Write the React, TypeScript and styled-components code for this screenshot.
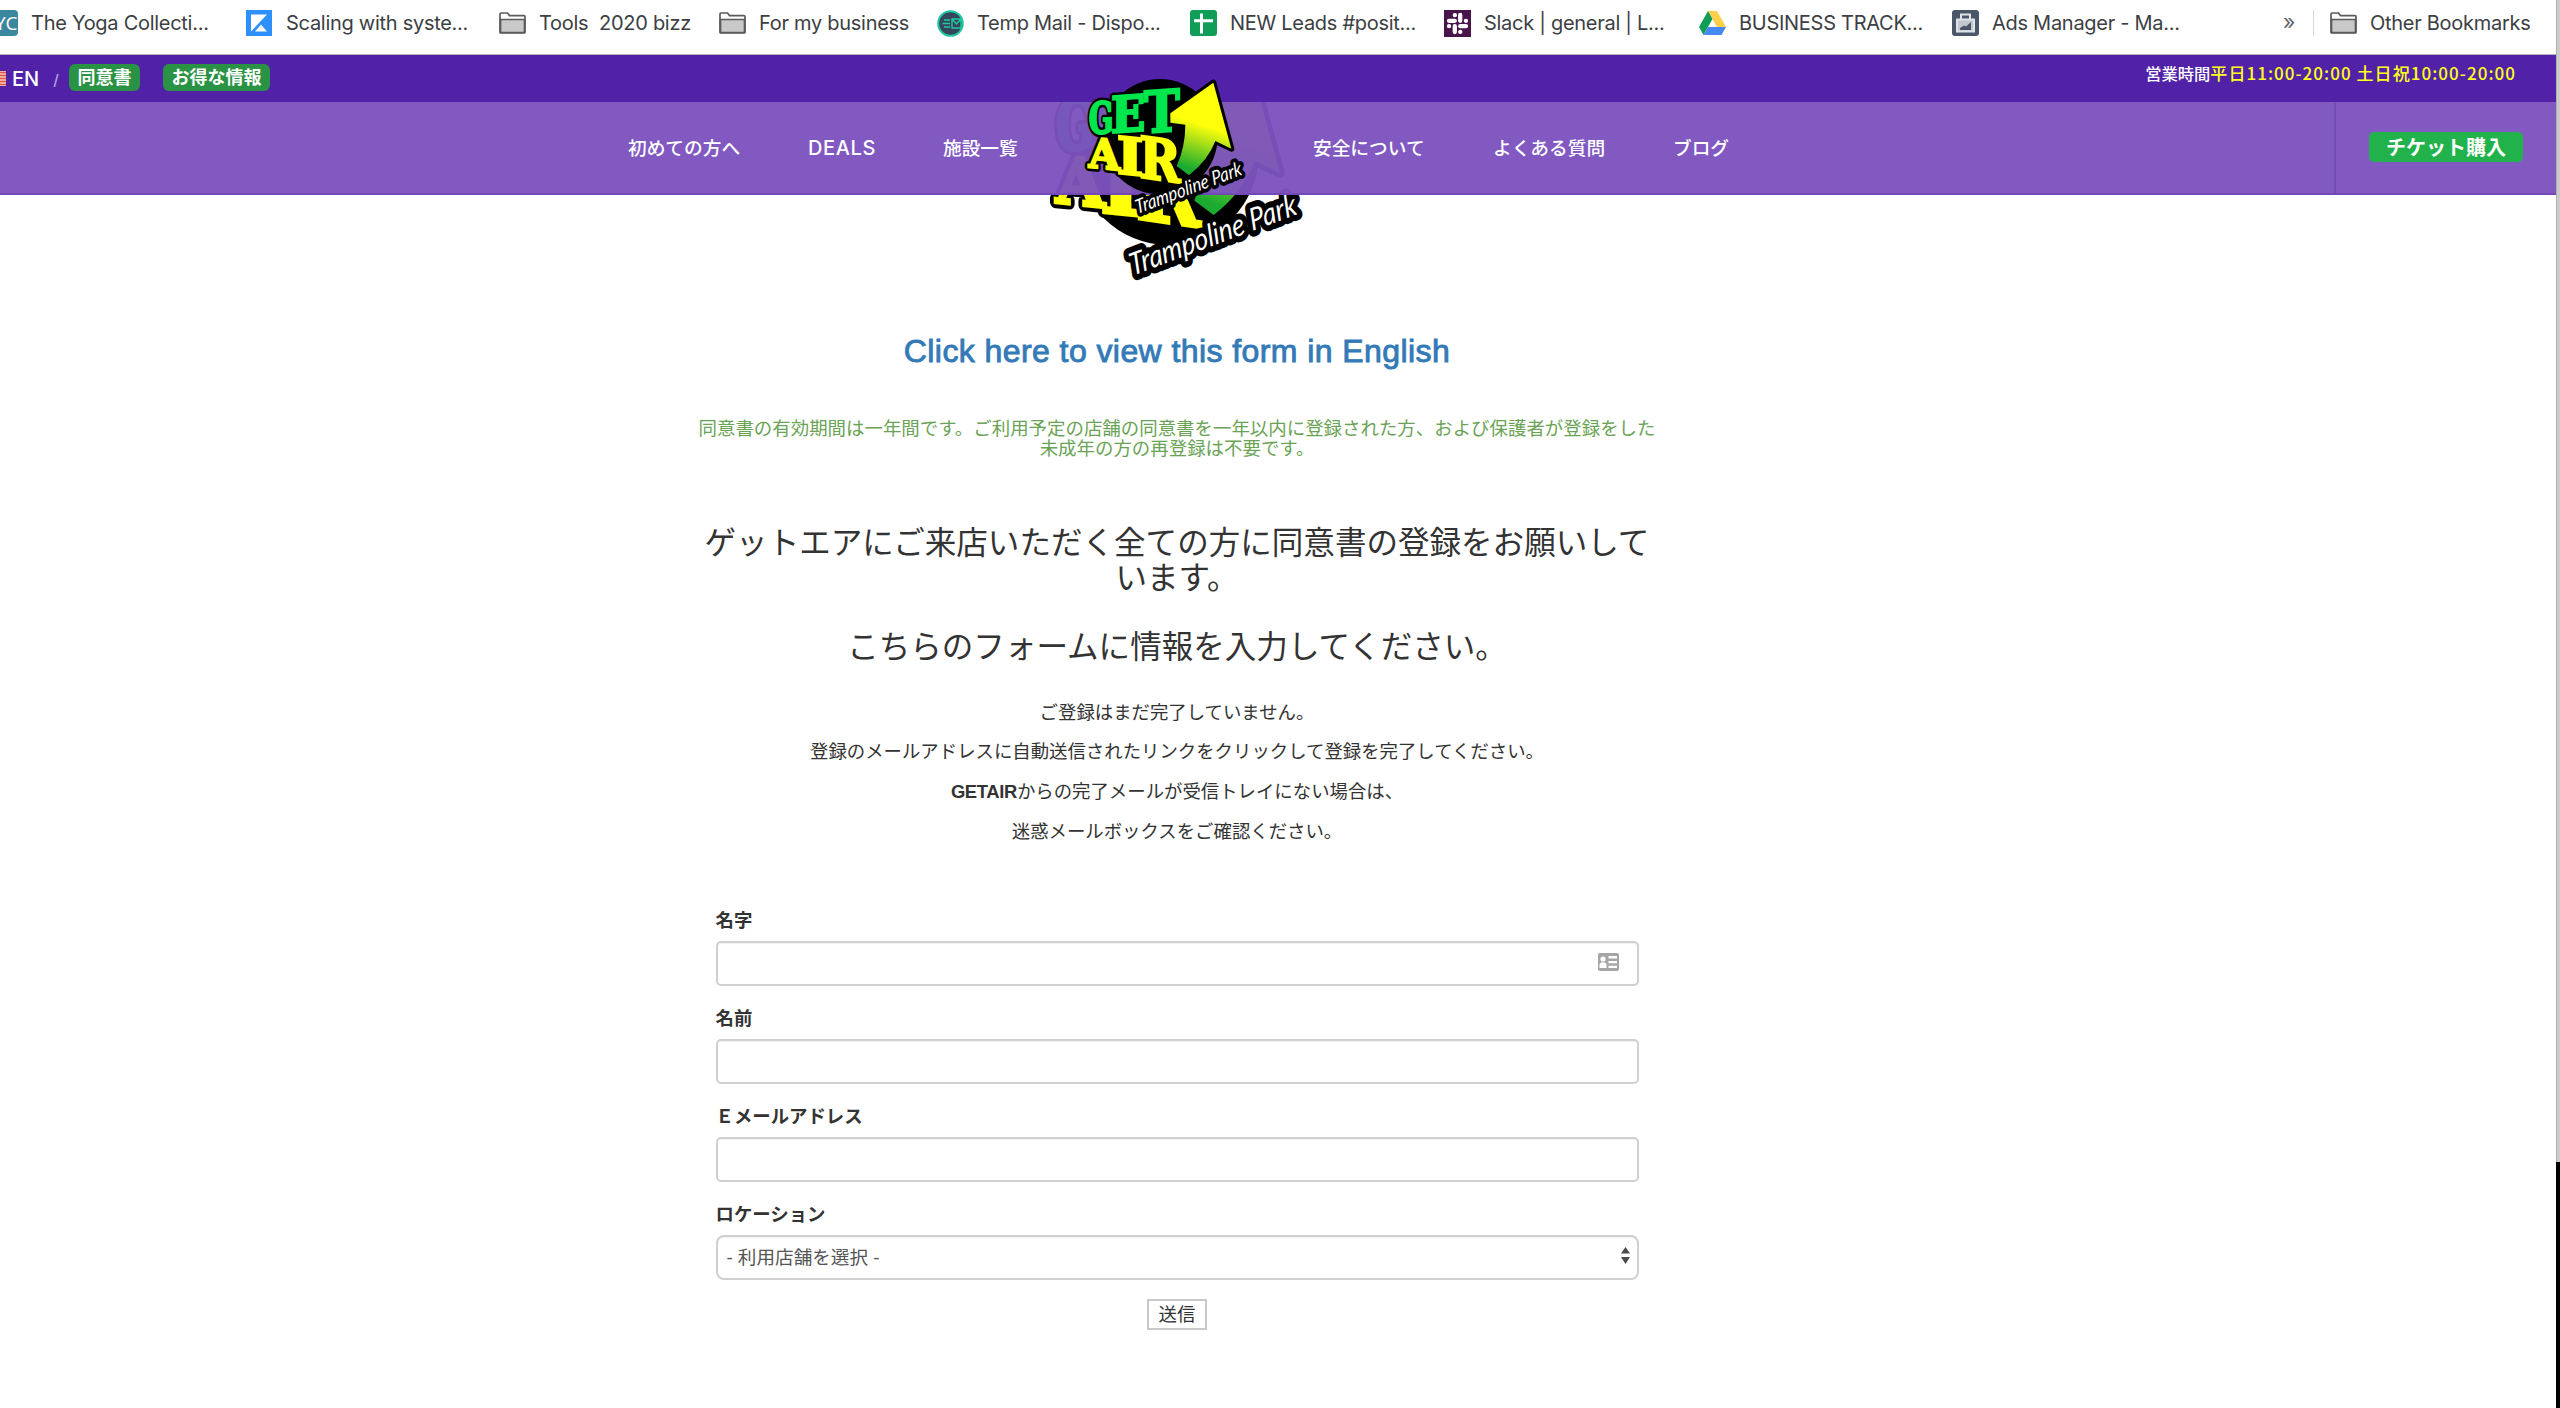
import React from "react";
import styled, { createGlobalStyle } from "styled-components";

const jp = `"Liberation Sans", "Noto Sans CJK JP", sans-serif`;

const GlobalStyle = createGlobalStyle`
  *, *::before, *::after { box-sizing: border-box; }
  body { margin: 0; background: #fff; font-family: ${jp}; color: #333; }
`;

const Window = styled.div`
  display: grid;
  grid-template-columns: 1fr 4px;
  width: 2560px;
  height: 1408px;
  overflow: hidden;
`;
const Page = styled.div`
  display: flex;
  flex-direction: column;
  min-width: 0;
`;
const Edge = styled.div`
  display: grid;
  grid-template-rows: 1162px 1fr;
`;
const EdgeLight = styled.div`
  background: #cbcbcb;
  border-left: 1px solid #b0b0b0;
`;
const EdgeDark = styled.div`
  background: #000;
`;

/* Bookmarks bar */
const Bookmarks = styled.div`
  display: flex;
  align-items: center;
  height: 55px;
  padding-bottom: 8px;
  border-bottom: 1px solid #b5b1bf;
  background: #fff;
  font: 400 20px/26px Inter, sans-serif;
  color: #3c4043;
`;
const Bookmark = styled.div<{ $w: number }>`
  display: flex;
  align-items: center;
  gap: 13px;
  flex: 0 0 ${(p) => p.$w}px;
  overflow: hidden;
  white-space: pre;
`;
const IconBox = styled.span<{ $w?: number }>`
  display: flex;
  justify-content: flex-end;
  flex: 0 0 ${(p) => p.$w ?? 27}px;
  overflow: hidden;
`;
const Label = styled.span`
  letter-spacing: -0.28px;
`;
const More = styled.span`
  width: 30px;
  font-size: 21px;
  color: #5f6368;
  padding-bottom: 3px;
`;
const Separator = styled.span`
  width: 1px;
  height: 26px;
  margin-right: 16px;
  background: #d5d7da;
`;

/* Site header */
const TopBar = styled.div`
  position: relative;
  z-index: 2;
  display: flex;
  align-items: flex-start;
  height: 47px;
  padding: 9px 40px 0 0;
  background: #5122a8;
  color: #fff;
`;
const Lang = styled.span`
  display: flex;
  align-items: center;
  height: 29px;
  gap: 6px;
  width: 69px;
  font: 500 20px/24px Inter, sans-serif;
`;
const Slash = styled.span`
  margin-left: 8px;
  margin-top: 3px;
  font-size: 15px;
  color: #b9a5de;
`;
const Badge = styled.a`
  height: 27px;
  padding: 0 8.5px;
  margin-right: 23px;
  border-radius: 6px;
  background: #2a9245;
  font-size: 18px;
  line-height: 28px;
  font-weight: 700;
`;
const Hours = styled.span`
  display: flex;
  margin-left: auto;
  font: 500 16.3px/18px "Noto Sans CJK JP", sans-serif;
`;
const HoursTime = styled.span`
  color: #ffff1a;
  font-size: 17px;
  letter-spacing: 1.05px;
`;
const Nav = styled.nav`
  position: relative;
  z-index: 1;
  display: flex;
  align-items: center;
  height: 92.5px;
  padding-left: 628px;
  border-bottom: 2px solid #7448b6;
  background: rgba(124, 82, 190, 0.96);
  color: #fff;
  font: 500 18.7px/26px "Noto Sans CJK JP", sans-serif;
`;
const NavLink = styled.a<{ $w: number }>`
  flex: 0 0 ${(p) => p.$w}px;
  white-space: nowrap;
`;
const NavLatin = styled.span`
  font: 500 20px/26px Inter, sans-serif;
  letter-spacing: 0.6px;
`;
const TicketCell = styled.div`
  display: flex;
  align-items: center;
  align-self: stretch;
  width: 222px;
  margin-left: auto;
  padding-left: 33px;
  border-left: 2px solid #744db3;
`;
const Ticket = styled.a`
  width: 154px;
  height: 30px;
  border-radius: 5px;
  background: #22b24c;
  text-align: center;
  font: 700 20px/29px "Noto Sans CJK JP", sans-serif;
`;
const BackLogo = styled.div`
  position: absolute;
  left: 1030px;
  top: 60px;
  z-index: 0;
  display: flex;
`;
const FrontLogo = styled(BackLogo)`
  z-index: 3;
`;

/* Content */
const Content = styled.main`
  width: 960px;
  margin: 0 0 0 697px;
  padding-top: 134.5px;
  text-align: center;
`;
const EnglishLink = styled.a`
  display: block;
  height: 44px;
  font-size: 32px;
  line-height: 44px;
  letter-spacing: 0.42px;
  white-space: nowrap;
  color: #337ab7;
  -webkit-text-stroke: 0.9px #337ab7;
`;
const Notice = styled.p`
  margin: 46px 0 0;
  font-size: 18.46px;
  line-height: 20.2px;
  color: #6aa355;
  white-space: nowrap;
`;
const Heading = styled.h3<{ $mt: number }>`
  margin: ${(p) => p.$mt}px 0 0;
  font-size: 31.55px;
  line-height: 34.65px;
  font-weight: 400;
  white-space: nowrap;
`;
const Steps = styled.div`
  margin-top: 28px;
  font-size: 18.4px;
  line-height: 39.6px;
`;
const Brand = styled.b`
  letter-spacing: -0.35px;
`;
const Form = styled.form`
  width: 923px;
  margin: 56.5px auto 0;
  text-align: left;
`;
const Field = styled.div`
  height: 98px;
`;
const FieldLabel = styled.label`
  display: block;
  height: 33px;
  font-size: 18.4px;
  line-height: 26px;
  font-weight: 700;
`;
const Control = styled.div<{ $r?: number }>`
  display: flex;
  align-items: center;
  justify-content: space-between;
  height: 45px;
  padding: 0 7px 4px 9px;
  border: 2px solid #d0d0d0;
  border-radius: ${(p) => p.$r ?? 5}px;
  box-shadow: inset 0 1px 1px rgba(0, 0, 0, 0.06);
  font-size: 18.6px;
  color: #555;
`;
const CardSlot = styled.span`
  display: flex;
  margin: 2px 11px 0 auto;
`;
const Submit = styled.button`
  display: block;
  width: 60px;
  height: 31px;
  margin: -0.5px auto 0;
  padding: 0;
  border: 2px solid #c9c9c9;
  background: #fff;
  color: #333;
  font: 400 18.4px/25px ${jp};
`;

const Folder = () => (
  <svg width="27" height="22" viewBox="0 0 27 22" fill="none" stroke="#5b5b5b" strokeWidth="1.7">
    <path d="M1 20V2.2Q1 1 2.2 1H8.5L10.5 3.6H25Q26 3.6 26 4.6V20Q26 21 25 21H2Q1 21 1 20Z" fill="#fff" />
    <path d="M1.5 7.5H25.5V20.5H1.5Z" fill="#c9c9c9" />
  </svg>
);
const Yoga = () => (
  <svg width="26" height="26" viewBox="0 0 26 26" style={{ flexShrink: 0 }}>
    <rect width="26" height="26" rx="4" fill="#3c87a0" />
    <text x="25.5" y="20" fontSize="19" fontFamily="Open Sans" fill="#fff" textAnchor="end">YC</text>
  </svg>
);
const Kajabi = () => (
  <svg width="27" height="26" viewBox="0 0 27 26">
    <rect width="26" height="26" fill="#2e8fff" />
    <path d="M5 4.5H21L5 21.5Z M15 14.5L21 21.5H9Z" fill="#fff" />
  </svg>
);
const TempMail = () => (
  <svg width="27" height="27" viewBox="0 0 27 27" fill="none" stroke="#1fc9a0" strokeWidth="1.4">
    <circle cx="13.5" cy="13.5" r="12.3" fill="#36465c" strokeWidth="2" />
    <path d="M7 10H13M5.5 13.5H13M7 17H13M15 9H24V18H15ZM15.5 9.5L19.5 14L23.5 9.5" />
  </svg>
);
const Sheets = () => (
  <svg width="27" height="26" viewBox="0 0 27 26">
    <rect width="27" height="26" rx="3" fill="#0f9d58" />
    <path d="M11.5 3.5V23.5M4 10.8H23" stroke="#fff" strokeWidth="3" />
  </svg>
);
const Slack = () => (
  <svg width="27" height="27" viewBox="0 0 27 27" stroke="#fff" strokeWidth="4.3" strokeLinecap="round">
    <rect width="27" height="27" fill="#48154b" stroke="none" />
    <path d="M5 10.8H10.8M16.2 5V10.8M16.2 16.2H22M10.8 16.2V22M10.8 5.2H10.9M21.9 10.8H22M16.2 21.9H16.3M5 16.2H5.1" />
  </svg>
);
const Drive = () => (
  <svg width="27" height="24" viewBox="0 0 27 24">
    <path d="M9 0H18L27 16H18Z" fill="#ffcf48" />
    <path d="M9 0L13.5 8L4.5 24L0 16Z" fill="#0f9d58" />
    <path d="M9 16H27L22.5 24H4.5Z" fill="#4688f4" />
  </svg>
);
const Ads = () => (
  <svg width="27" height="26" viewBox="0 0 27 26">
    <rect width="27" height="26" rx="3" fill="#4b5668" />
    <rect x="5" y="9.5" width="17" height="12" fill="#c3c8cf" />
    <path d="M9 10V4.5H18V10M5 9.5H22V21.5H5Z" fill="none" stroke="#dfe3e8" strokeWidth="2" />
    <path d="M8 20V18L12 15.5L14 16.5L19 12V20Z" fill="#4b5668" />
  </svg>
);
const Flag = () => (
  <svg width="6" height="15" viewBox="0 0 6 15">
    <rect width="6" height="15" fill="#f5c9c0" />
    <path d="M0 1.5H6M0 4.5H6M0 7.5H6M0 10.5H6M0 13.5H6" stroke="#e2553f" strokeWidth="1.6" />
  </svg>
);
const IdCard = () => (
  <svg width="21" height="18" viewBox="0 0 21 18">
    <rect width="21" height="18" rx="2" fill="#a6a6a6" />
    <circle cx="5" cy="6" r="2.6" fill="#fff" />
    <path d="M1.5 15V12Q1.5 9.3 5 9.3T8.5 12V15ZM10.5 3H19V5.5H10.5ZM10.5 8H19V10.3H10.5ZM10.5 12.8H19V15H10.5Z" fill="#fff" />
  </svg>
);
const Arrows = () => (
  <svg width="9" height="17" viewBox="0 0 9 17" fill="#4a4a4a">
    <path d="M4.5 0L9 6.5H0ZM4.5 17L9 10H0Z" />
  </svg>
);

/* letter, placement, font size, width, colour */
const letters: [string, string, number, number, string][] = [
  ["G", "matrix(1 -0.06 0 1 176 222)", 130, 74, "#00e64d"],
  ["E", "matrix(1 -0.07 0 1 243 219)", 150, 103, "#00e64d"],
  ["T", "matrix(1 -0.07 0 1 341 219)", 172, 108, "#00e64d"],
  ["A", "matrix(1 0.1 0 1 176 322)", 124, 93, "#ffff0a"],
  ["I", "matrix(1 0.1 0 1 260 340)", 154, 80, "#ffff0a"],
  ["R", "matrix(1 0.14 0 1 328 352)", 172, 124, "#ffff0a"],
];

const LogoArt = ({ id }: { id: string }) => (
  <>
    <defs>
      <linearGradient id={id} gradientUnits="userSpaceOnUse" x1="520" y1="195" x2="478" y2="325">
        <stop offset="0" stopColor="#ffff0a" />
        <stop offset="1" stopColor="#1aab30" />
      </linearGradient>
    </defs>
    <circle cx="390" cy="230" r="173" />
    <g stroke="#000" strokeWidth="22" strokeLinejoin="round" fontFamily="DejaVu Serif" fontWeight="700">
      {letters.map(([c, m, s, w]) => (
        <text key={c} transform={m} fontSize={s} textLength={w} lengthAdjust="spacingAndGlyphs">{c}</text>
      ))}
    </g>
    <path
      d="M550 68L604 266L556 243Q535 300 477 346L440 318Q466 260 466 194L421 188V160Z"
      fill={`url(#${id})`} stroke="#000" strokeWidth="18" strokeLinejoin="round" paintOrder="stroke"
    />
    <g fontFamily="DejaVu Serif" fontWeight="700" strokeWidth="7">
      {letters.map(([c, m, s, w, f]) => (
        <text key={c} transform={m} fontSize={s} textLength={w} lengthAdjust="spacingAndGlyphs" fill={f} stroke={f}>{c}</text>
      ))}
    </g>
    <text
      transform="translate(322 462) rotate(-20.5) skewX(-6)" fontFamily="Lato" fontStyle="italic" fontSize="58"
      textLength="338" lengthAdjust="spacingAndGlyphs" fill="#fff" stroke="#000" strokeWidth="23"
      strokeLinejoin="round" paintOrder="stroke"
    >
      Trampoline Park
    </text>
  </>
);

const bookmarks: [React.FC, string, number][] = [
  [Kajabi, "Scaling with syste...", 253],
  [Folder, "Tools  2020 bizz", 220],
  [Folder, "For my business", 218],
  [TempMail, "Temp Mail - Dispo...", 253],
  [Sheets, "NEW Leads #posit...", 254],
  [Slack, "Slack | general | L...", 255],
  [Drive, "BUSINESS TRACK...", 253],
  [Ads, "Ads Manager - Ma...", 331],
];

export default function App() {
  return (
    <>
      <GlobalStyle />
      <Window>
        <Page>
          <Bookmarks>
            <Bookmark $w={246}>
              <IconBox $w={18}><Yoga /></IconBox>
              <Label>The Yoga Collecti...</Label>
            </Bookmark>
            {bookmarks.map(([Icon, text, w]) => (
              <Bookmark key={text} $w={w}>
                <IconBox><Icon /></IconBox>
                <Label>{text}</Label>
              </Bookmark>
            ))}
            <More>»</More>
            <Separator />
            <Bookmark $w={220}>
              <IconBox><Folder /></IconBox>
              <Label>Other Bookmarks</Label>
            </Bookmark>
          </Bookmarks>
          <TopBar>
            <Lang><Flag />EN<Slash>/</Slash></Lang>
            <Badge>同意書</Badge>
            <Badge>お得な情報</Badge>
            <Hours>営業時間<HoursTime>平日11:00-20:00 土日祝10:00-20:00</HoursTime></Hours>
          </TopBar>
          <Nav>
            <NavLink $w={180}>初めての方へ</NavLink>
            <NavLink $w={135}><NavLatin>DEALS</NavLatin></NavLink>
            <NavLink $w={370}>施設一覧</NavLink>
            <NavLink $w={180}>安全について</NavLink>
            <NavLink $w={180}>よくある質問</NavLink>
            <NavLink $w={60}>ブログ</NavLink>
            <TicketCell><Ticket>チケット購入</Ticket></TicketCell>
          </Nav>
          <BackLogo>
            <svg width="300" height="230" viewBox="0 0 900 690">
              <g transform="matrix(1.57 0 0 1.57 -198 -78)"><LogoArt id="arrowBack" /></g>
            </svg>
          </BackLogo>
          <FrontLogo>
            <svg width="300" height="230" viewBox="0 0 900 690"><LogoArt id="arrowFront" /></svg>
          </FrontLogo>
          <Content>
            <EnglishLink>Click here to view this form in English</EnglishLink>
            <Notice>
              同意書の有効期間は一年間です。ご利用予定の店舗の同意書を一年以内に登録された方、および保護者が登録をした<br />
              未成年の方の再登録は不要です。
            </Notice>
            <Heading $mt={67}>
              ゲットエアにご来店いただく全ての方に同意書の登録をお願いして<br />います。
            </Heading>
            <Heading $mt={34.5}>こちらのフォームに情報を入力してください。</Heading>
            <Steps>
              <div>ご登録はまだ完了していません。</div>
              <div>登録のメールアドレスに自動送信されたリンクをクリックして登録を完了してください。</div>
              <div><Brand>GETAIR</Brand>からの完了メールが受信トレイにない場合は、</div>
              <div>迷惑メールボックスをご確認ください。</div>
            </Steps>
            <Form>
              <Field><FieldLabel>名字</FieldLabel><Control><CardSlot><IdCard /></CardSlot></Control></Field>
              <Field><FieldLabel>名前</FieldLabel><Control /></Field>
              <Field><FieldLabel>Ｅメールアドレス</FieldLabel><Control /></Field>
              <Field>
                <FieldLabel>ロケーション</FieldLabel>
                <Control $r={8}>- 利用店舗を選択 -<Arrows /></Control>
              </Field>
            </Form>
            <Submit>送信</Submit>
          </Content>
        </Page>
        <Edge><EdgeLight /><EdgeDark /></Edge>
      </Window>
    </>
  );
}
